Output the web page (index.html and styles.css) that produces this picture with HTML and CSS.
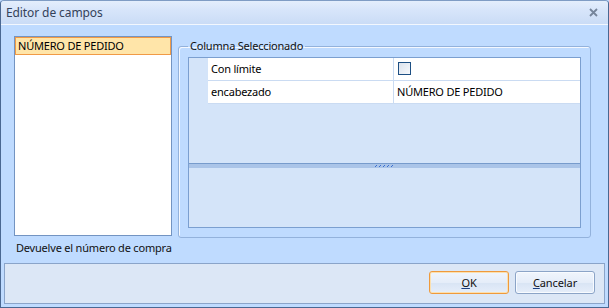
FILE: index.html
```html
<!DOCTYPE html>
<html lang="es">
<head>
<meta charset="utf-8">
<title>Editor de campos</title>
<link rel="stylesheet" href="styles.css">
</head>
<body>
<div class="window">
  <div class="titlebar">
    <span class="title">Editor de campos</span>
    <svg class="close" width="9" height="9" viewBox="0 0 9 9"><path d="M1 1 L8 8 M8 1 L1 8" stroke="#76859b" stroke-width="1.8" fill="none"/></svg>
  </div>
  <div class="content">
    <div class="main">
      <div class="list">
        <div class="item selected">NÚMERO DE PEDIDO</div>
      </div>
      <fieldset class="group">
        <legend>Columna Seleccionado</legend>
        <div class="grid">
          <div class="rows">
            <div class="row">
              <div class="margin"></div>
              <div class="cell name">Con límite</div>
              <div class="cell value"><span class="checkbox"></span></div>
            </div>
            <div class="row">
              <div class="margin"></div>
              <div class="cell name">encabezado</div>
              <div class="cell value">NÚMERO DE PEDIDO</div>
            </div>
          </div>
          <div class="splitter">
            <svg width="19" height="3" viewBox="0 0 19 3"><g fill="#3b6fd1"><rect x="0" y="1" width="1" height="1"/><rect x="1" y="0" width="1" height="1"/><rect x="4" y="1" width="1" height="1"/><rect x="5" y="0" width="1" height="1"/><rect x="8" y="1" width="1" height="1"/><rect x="9" y="0" width="1" height="1"/><rect x="12" y="1" width="1" height="1"/><rect x="13" y="0" width="1" height="1"/><rect x="16" y="1" width="1" height="1"/><rect x="17" y="0" width="1" height="1"/></g></svg>
          </div>
          <div class="help"></div>
        </div>
      </fieldset>
    </div>
    <div class="desc">Devuelve el número de compra</div>
  </div>
  <div class="footer">
    <button class="btn default"><u>O</u>K</button>
    <button class="btn"><u>C</u>ancelar</button>
  </div>
</div>
</body>
</html>
```
FILE: styles.css
```css
* { box-sizing: border-box; }
html, body { margin: 0; padding: 0; }
body {
  font-family: "Noto Sans", "Open Sans", sans-serif;
  font-size: 11px;
  letter-spacing: -0.2px;
  color: #000;
  background: #bfdbff;
}
.window {
  width: 609px;
  height: 308px;
  border: 1px solid #4a6892;
  border-top-color: #7f9cc4;
  border-radius: 4px 4px 0 0;
  background: #bfdbff;
  display: flex;
  flex-direction: column;
  overflow: hidden;
}
.titlebar {
  height: 24px;
  flex: none;
  display: flex;
  align-items: center;
  justify-content: space-between;
  padding: 0 10px 0 5px;
  background: linear-gradient(#e4eefc, #d7e5fa 40%, #cadcf6);
  border-bottom: 1px solid #f2f7fe;
}
.title {
  font-size: 12px;
  letter-spacing: -0.1px;
  color: #34425a;
}
.close { display: block; }
.content {
  flex: 1;
  padding: 11px 16px 0 13px;
  display: flex;
  flex-direction: column;
}
.main {
  display: flex;
  gap: 6px;
  align-items: flex-start;
}
.list {
  width: 158px;
  height: 200px;
  border: 1px solid #7394c2;
  background: #fff;
  flex: none;
}
.item {
  height: 18px;
  line-height: 16px;
  padding-left: 2px;
  border: 1px solid transparent;
  white-space: nowrap;
}
.item.selected {
  border-color: #f09a46;
  background: #ffe5a9;
}
.group {
  width: 413px;
  margin: 2px 0 0 0;
  padding: 3px 9px 9px 9px;
  border: 1px solid #93b2dc;
  border-radius: 3px;
  box-shadow: inset 1px 1px 0 #f4f8ff;
  min-inline-size: 0;
}
.group legend {
  margin-left: 0;
  padding: 0 2px;
  line-height: 16px;
  color: #111;
}
.grid {
  height: 171px;
  border: 1px solid #7b9fd0;
  background: #d4e4f9;
  display: flex;
  flex-direction: column;
}
.rows {
  height: 105px;
  flex: none;
}
.row {
  display: flex;
  height: 23px;
}
.margin {
  width: 19px;
  flex: none;
}
.cell {
  background: #fff;
  border-bottom: 1px solid #cadbf2;
  line-height: 22px;
  padding-left: 3px;
  white-space: nowrap;
  display: flex;
  align-items: center;
}
.name {
  width: 186px;
  border-right: 1px solid #cadbf2;
}
.value {
  flex: 1;
  padding-left: 3px;
}
.checkbox {
  display: block;
  width: 13px;
  height: 13px;
  margin-left: 1px;
  margin-top: -1px;
  border: 1px solid #1d4f83;
  background: linear-gradient(135deg, #dbe2ec, #f6f8fb);
}
.splitter {
  height: 5px;
  flex: none;
  border-top: 1px solid #779bcc;
  background: #aac4e8;
  display: flex;
  justify-content: center;
  align-items: flex-start;
  padding-top: 1px;
}
.splitter svg { display: block; }
.help {
  flex: 1;
  background: #d4e4f9;
}
.desc {
  margin-top: 2px;
  padding-left: 2px;
  line-height: 16px;
  color: #111;
}
.footer {
  height: 41px;
  flex: none;
  margin: 0 3px 3px 3px;
  border: 1px solid #8aa4c9;
  background: #dce7f6;
  display: flex;
  justify-content: flex-end;
  align-items: flex-start;
  gap: 6px;
  padding: 7px 9px 0 0;
}
.btn {
  width: 80px;
  height: 23px;
  font-family: inherit;
  font-size: 11px;
  letter-spacing: -0.1px;
  color: #111;
  border: 1px solid #8ba4c7;
  border-radius: 3px;
  background: linear-gradient(#f0f5fc, #e5edf9 50%, #d8e4f4 51%, #e6eefa);
  padding: 0;
  box-shadow: inset 0 0 0 1px #f8fbff;
}
.btn.default {
  border-color: #ef9a3c;
  box-shadow: inset 0 0 0 1px #fbe0b0;
}
.btn u { text-decoration-color: #1a3d80; }
```
